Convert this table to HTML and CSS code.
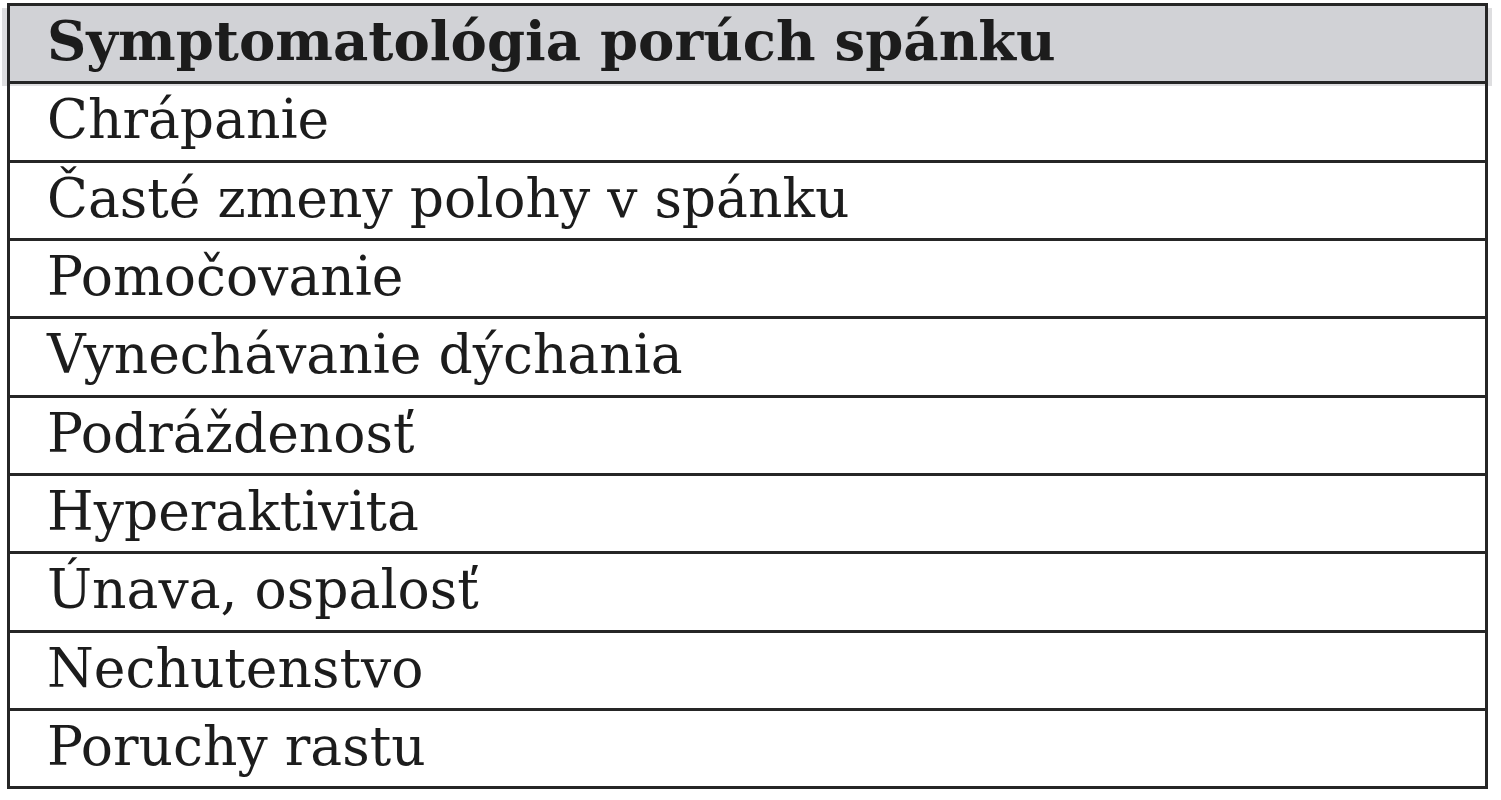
FILE: index.html
```html
<!DOCTYPE html>
<html lang="sk">
<head>
<meta charset="utf-8">
<title>Symptomatológia porúch spánku</title>
<link rel="stylesheet" href="styles.css">
</head>
<body>
<div class="wrap">
<table class="sym">
<thead>
<tr><th>Symptomatológia porúch spánku</th></tr>
</thead>
<tbody>
<tr><td>Chrápanie</td></tr>
<tr><td>Časté zmeny polohy v spánku</td></tr>
<tr><td>Pomočovanie</td></tr>
<tr><td>Vynechávanie dýchania</td></tr>
<tr><td>Podráždenosť</td></tr>
<tr><td>Hyperaktivita</td></tr>
<tr><td>Únava, ospalosť</td></tr>
<tr><td>Nechutenstvo</td></tr>
<tr><td>Poruchy rastu</td></tr>
</tbody>
</table>
</div>
</body>
</html>
```
FILE: styles.css
```css
html, body {
  margin: 0;
  padding: 0;
  background: #ffffff;
}
.wrap {
  padding: 3px 0 0 7px;
}
.sym {
  border-collapse: collapse;
  width: 1481px;
  font-family: "DejaVu Serif", "Liberation Serif", serif;
  color: #1c1c1c;
}
.sym th,
.sym td {
  border: 3px solid #262626;
  height: 71.35px;
  padding: 0 0 4px 37px;
  text-align: left;
  vertical-align: middle;
  line-height: 1;
}
.sym th {
  background: #d1d2d6;
  font-weight: bold;
  font-size: 54.5px;
  box-shadow: -7px 3px 0 #dedee0, 5px 3px 0 #dedee0;
}
.sym td {
  font-weight: normal;
  font-size: 53.5px;
}
```
